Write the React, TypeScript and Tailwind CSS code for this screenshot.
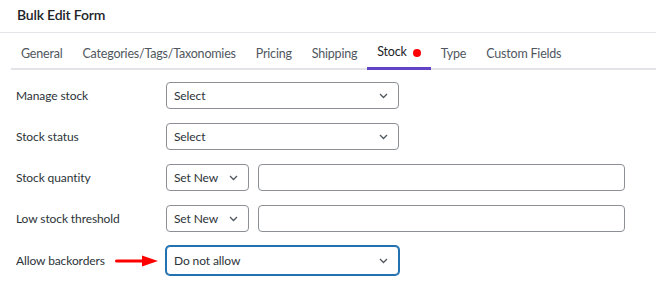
const tabs = ["General", "Categories/Tags/Taxonomies", "Pricing", "Shipping", "Stock", "Type", "Custom Fields"];

function Chevron() {
  return (
    <svg className="shrink-0" width="9" height="6" viewBox="0 0 9 6">
      <polyline points="1,1 4.5,4.5 8,1" fill="none" stroke="#50575e" strokeWidth="1.3" />
    </svg>
  );
}

function SelectBox({ value, width, focused }: { value: string; width: string; focused?: boolean }) {
  return (
    <div
      className={`flex h-[27px] items-center justify-between rounded-[4px] border bg-white pl-[7px] pr-[10px] ${width} ${
        focused ? "h-[29px] border-[#2271b1] shadow-[0_0_0_1px_#2271b1]" : "border-[#8c8f94]"
      }`}
    >
      <span className="text-[12px] tracking-[-0.1px] text-[#2c3338]">{value}</span>
      <Chevron />
    </div>
  );
}

function Row({ label, children, arrow }: { label: string; children: React.ReactNode; arrow?: boolean }) {
  return (
    <div className="flex items-center">
      <div className="relative w-[150px] shrink-0 text-[12px] tracking-[-0.1px] text-[#2c3338]">
        {label}
        {arrow && (
          <svg className="absolute left-[99px] top-1/2 -translate-y-1/2" width="43" height="12" viewBox="0 0 43 12">
            <rect x="0" y="4.5" width="30" height="3" rx="1.5" fill="#f00" />
            <polygon points="27,0.5 43,6 27,11.5" fill="#f00" />
          </svg>
        )}
      </div>
      {children}
    </div>
  );
}

export default function App() {
  return (
    <div className="h-[296px] w-[656px] bg-white" style={{ fontFamily: 'Lato, "Noto Sans", sans-serif' }}>
      <div className="flex h-[33px] items-center border-b border-[#e2e4e7] px-[17px] pb-[3px] text-[14px] font-semibold tracking-[-0.2px] text-[#1d2327]">
        Bulk Edit Form
      </div>
      <div className="ml-[11px] flex h-[37px] border-b-2 border-[#e2e4e7]">
        {tabs.map((t) => (
          <div
            key={t}
            className={`-mb-[2px] flex items-center gap-[6px] px-[10px] pt-[5px] text-[12.5px] tracking-[-0.2px] ${
              t === "Stock" ? "border-b-[3px] border-[#6244c7] text-[#1d2327]" : "text-[#50575e]"
            }`}
          >
            {t}
            {t === "Stock" && <span className="h-[8px] w-[8px] rounded-full bg-[#f00]" />}
          </div>
        ))}
      </div>
      <div className="flex flex-col gap-[14px] px-[16px] pt-[12px]">
        <Row label="Manage stock">
          <SelectBox value="Select" width="w-[233px]" />
        </Row>
        <Row label="Stock status">
          <SelectBox value="Select" width="w-[233px]" />
        </Row>
        <Row label="Stock quantity">
          <SelectBox value="Set New" width="w-[83px]" />
          <div className="ml-[9px] h-[27px] w-[367px] rounded-[4px] border border-[#8c8f94]" />
        </Row>
        <Row label="Low stock threshold">
          <SelectBox value="Set New" width="w-[83px]" />
          <div className="ml-[9px] h-[27px] w-[367px] rounded-[4px] border border-[#8c8f94]" />
        </Row>
        <Row label="Allow backorders" arrow>
          <SelectBox value="Do not allow" width="w-[233px]" focused />
        </Row>
      </div>
    </div>
  );
}
